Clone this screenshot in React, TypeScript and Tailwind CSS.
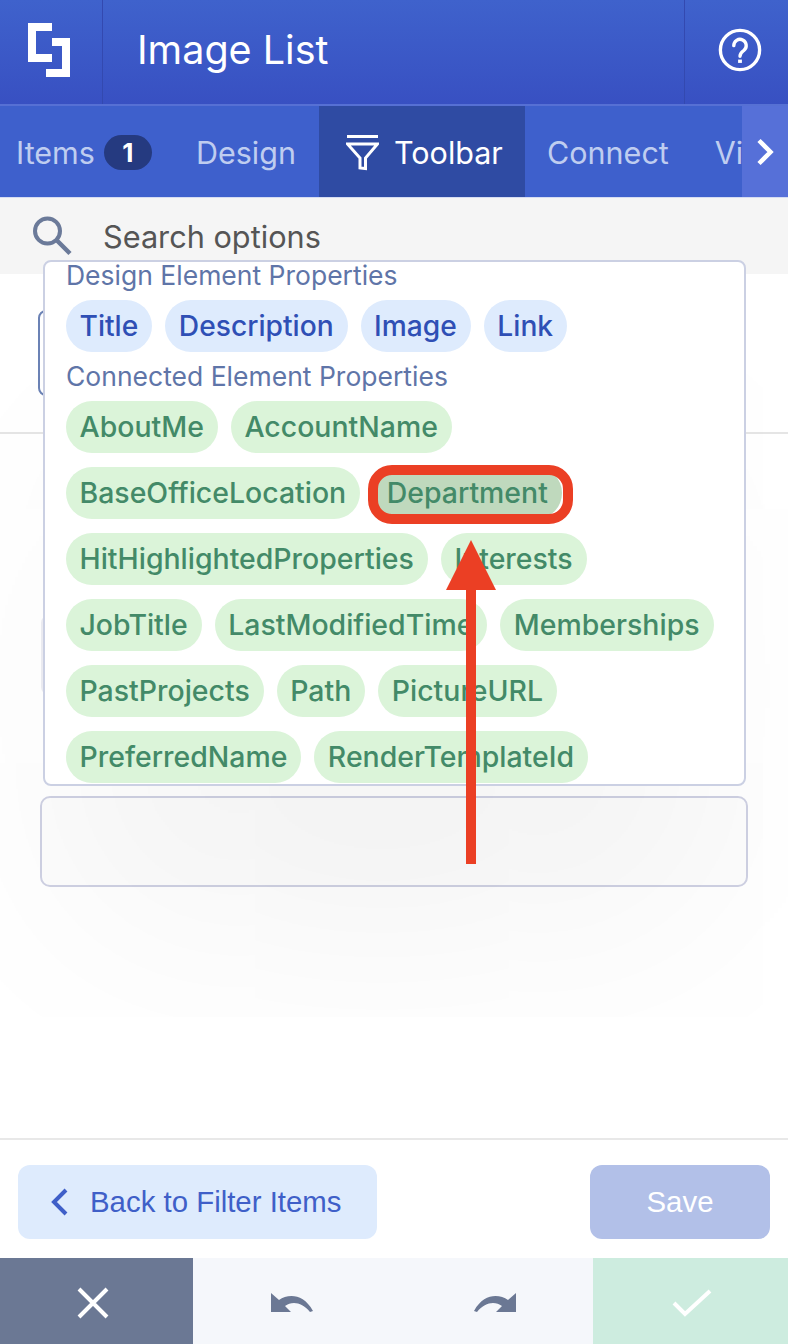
import React from "react";

function Chip({ label, kind = "green", cls = "" }: { label: string; kind?: "green" | "blue"; cls?: string }) {
  const c = kind === "blue" ? "bg-[#deebfd] text-[#2f4fb5] text-[28.200px]" : "bg-[#dbf4d9] text-[#438a68] text-[28.450px]";
  return (
    <span className={`h-[52px] rounded-[26px] pl-[13.500px] pr-[14px] flex items-center font-medium whitespace-nowrap ${c} ${cls}`}>
      {label}
    </span>
  );
}

function Row({ children }: { children: React.ReactNode }) {
  return <div className="flex gap-[13px]">{children}</div>;
}

export default function App() {
  return (
    <div className="w-[788px] h-[1344px] flex flex-col bg-white overflow-hidden relative font-['Inter',sans-serif]">
      <header className="h-[104px] flex shrink-0 bg-gradient-to-b from-[#3f62cc] to-[#3850c2] text-white">
        <div className="w-[103px] flex items-center justify-center border-r border-[#3349b0]">
          <svg width="42" height="54" viewBox="0 0 42 54" className="mt-[-4px] ml-[-5px]">
            <path d="M0 0H24V8H8V31H24V39H0Z M24 15H42V54H18V46H34V23H24Z" fill="#fff" />
          </svg>
        </div>
        <div className="flex-1 flex items-center pl-[34px] pb-[2px] text-[39.500px] leading-none">Image List</div>
        <div className="w-[104px] flex items-center justify-center border-l border-[#3349b0]">
          <svg width="44" height="44" viewBox="0 0 46 46" fill="none" stroke="#fff" strokeWidth="3.500" className="ml-[6px] mt-[-5px]">
            <circle cx="23" cy="23" r="20.500" />
            <path d="M16.500 18.500a6.500 6.500 0 1 1 10.500 5c-2.500 2-4 3-4 6" strokeLinecap="round" />
            <path d="M23 33v3.500" strokeWidth="4" />
          </svg>
        </div>
      </header>
      <nav className="h-[93px] shrink-0 flex items-stretch bg-[#3e60cc] text-[#bfcdf0] text-[30.500px] border-t-2 border-[#5670d4] relative overflow-hidden">
        <div className="flex items-center pl-[16px] pt-[2px] w-[319px]">
          <span>Items</span>
          <span className="ml-[9px] w-[48px] h-[35px] rounded-full bg-[#253a80] text-white text-[26px] font-bold flex items-center justify-center">1</span>
          <span className="ml-[44px]">Design</span>
        </div>
        <div className="w-[206px] bg-[#2f4ba3] text-white flex items-center pl-[27px] pt-[2px] gap-[15px]">
          <svg width="33" height="36" viewBox="0 0 33 36" fill="none" stroke="#fff" strokeWidth="3">
            <path d="M1 1.500H32" />
            <path d="M1.500 9H31.500L19.500 23V33.500L14 33V23Z" />
          </svg>
          <span>Toolbar</span>
        </div>
        <div className="flex items-center pl-[22px] pt-[2px] whitespace-nowrap">
          <span>Connect</span>
          <span className="ml-[46px]">Vi</span>
        </div>
        <div className="absolute right-0 top-0 bottom-0 w-[46px] bg-[#5670d8] flex items-center justify-center">
          <svg width="18" height="28" viewBox="0 0 18 28" fill="none" stroke="#fff" strokeWidth="4.500">
            <path d="M3 2.500L14.500 14L3 25.500" />
          </svg>
        </div>
      </nav>
      <div className="h-[77px] shrink-0 bg-[#f5f5f5] flex items-start pl-[32px] pt-[18px] border-t border-[#d5dcf2]">
        <svg width="40" height="40" viewBox="0 0 40 40" fill="none" stroke="#6b7a99" strokeWidth="4">
          <circle cx="15.500" cy="15" r="12.500" />
          <path d="M24.500 24L38 37.500" strokeWidth="4.500" />
        </svg>
        <span className="ml-[31px] text-[30.700px] leading-[42px] text-[#555]">Search options</span>
      </div>
      <main className="flex-1 relative bg-white">
        <div className="h-[160px] border-b-2 border-[#e5e5e5] pt-[36px] pl-[38px]">
          <div className="w-[60px] h-[86px] border-2 border-[#6b82b5] rounded-[8px]" />
        </div>
        <div className="absolute left-[41px] top-[341px] w-[60px] h-[80px] rounded-[8px] border-2 border-[#ececf2]" />
        <div className="absolute left-[40px] top-[522px] w-[708px] h-[91px] rounded-[10px] border-2 border-[#cfd1e3] bg-[#fdfdfd]" />
        <div className="absolute left-[43px] top-[-14px] w-[703px] h-[526px] bg-white rounded-[8px] border-2 border-[#cbd0e3] shadow-[0_170px_320px_-50px_rgba(0,0,0,0.06)] overflow-hidden pl-[21px]">
          <div className="text-[26.500px] leading-[28px] mt-[-1px] text-[#5f75a8]">Design Element Properties</div>
          <div className="mt-[11px]">
            <Row>
              <Chip kind="blue" label="Title" />
              <Chip kind="blue" label="Description" />
              <Chip kind="blue" label="Image" />
              <Chip kind="blue" label="Link" />
            </Row>
          </div>
          <div className="text-[26.500px] leading-[28px] text-[#5f75a8] mt-[10px]">Connected Element Properties</div>
          <div className="flex flex-col gap-[14px] mt-[11px]">
            <Row>
              <Chip label="AboutMe" />
              <Chip label="AccountName" />
            </Row>
            <Row>
              <Chip label="BaseOfficeLocation" />
              <Chip label="Department" cls="!bg-[#bfd9bd]" />
            </Row>
            <Row>
              <Chip label="HitHighlightedProperties" />
              <Chip label="Interests" />
            </Row>
            <Row>
              <Chip label="JobTitle" />
              <Chip label="LastModifiedTime" />
              <Chip label="Memberships" />
            </Row>
            <Row>
              <Chip label="PastProjects" />
              <Chip label="Path" />
              <Chip label="PictureURL" />
            </Row>
            <Row>
              <Chip label="PreferredName" />
              <Chip label="RenderTemplateId" />
            </Row>
          </div>
        </div>
      </main>
      <div className="h-[120px] shrink-0 border-t-2 border-[#e8e8e8] flex items-start justify-between pl-[18px] pr-[18px] pt-[25px]">
        <div className="w-[359px] h-[74px] rounded-[12px] bg-[#deebfd] flex items-center text-[#3f5fc8] text-[29.400px] font-['Liberation_Sans',sans-serif]">
          <svg width="18" height="28" viewBox="0 0 18 28" fill="none" stroke="#3f5fc8" strokeWidth="4" className="ml-[33px]">
            <path d="M15 2L3 14L15 26" />
          </svg>
          <span className="ml-[21px]">Back to Filter Items</span>
        </div>
        <div className="w-[180px] h-[74px] rounded-[12px] bg-[#b2c0e8] flex items-center justify-center text-white text-[29.400px] font-['Liberation_Sans',sans-serif]">
          Save
        </div>
      </div>
      <div className="h-[86px] shrink-0 flex">
        <div className="w-[193px] bg-[#6b7894] flex items-center justify-center">
          <svg width="32" height="32" viewBox="0 0 32 32" stroke="#fff" strokeWidth="4" className="mr-[7px] mt-[3px]">
            <path d="M2 2L30 30M30 2L2 30" />
          </svg>
        </div>
        <div className="flex-1 bg-[#f5f7fb] flex items-center justify-center">
          <svg width="44" height="20" viewBox="0 0 44 20" className="mr-[1px] mt-[4px]">
            <path d="M1 0L9 7C18 1 33 0 43 18L40 19C32 9 22 8 15 13L21 19H1Z" fill="#6b7894" />
          </svg>
          <svg width="44" height="20" viewBox="0 0 44 20" className="ml-[158px] mt-[4px]">
            <path d="M43 0L35 7C26 1 11 0 1 18L4 19C12 9 22 8 29 13L23 19H43Z" fill="#6b7894" />
          </svg>
        </div>
        <div className="w-[195px] bg-[#cdecdf] flex items-center justify-center">
          <svg width="40" height="30" viewBox="0 0 40 30" fill="none" stroke="#fff" strokeWidth="4" className="ml-[3px] mt-[4px]">
            <path d="M2 15L13 26L38 3" />
          </svg>
        </div>
      </div>
      <div className="absolute left-[368px] top-[465px] w-[205px] h-[59px] rounded-[24px] border-[10px] border-[#eb3f24]" />
      <svg width="52" height="326" viewBox="0 0 52 326" className="absolute left-[445px] top-[540px]">
        <path d="M26 0L51 50H31V324H21V50H1Z" fill="#eb3f24" />
      </svg>
    </div>
  );
}
